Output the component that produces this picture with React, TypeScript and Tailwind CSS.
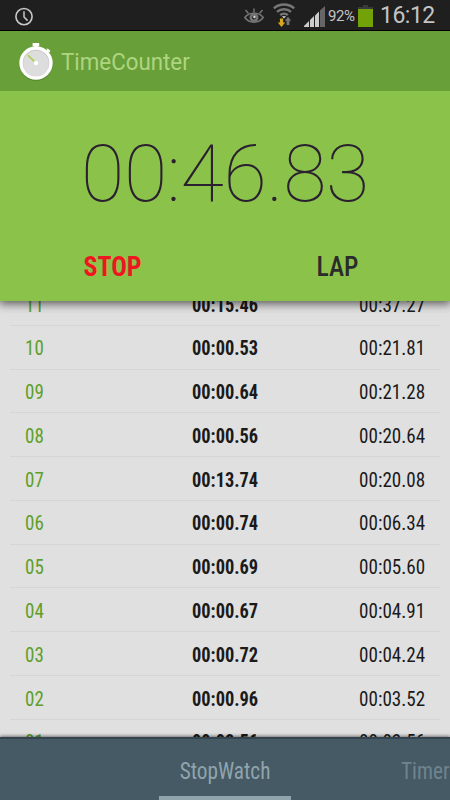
import clsx from 'clsx';

type Lap = {
  id: string;
  split: string;
  total: string;
};

const laps: Lap[] = [
  { id: '11', split: '00:15.46', total: '00:37.27' },
  { id: '10', split: '00:00.53', total: '00:21.81' },
  { id: '09', split: '00:00.64', total: '00:21.28' },
  { id: '08', split: '00:00.56', total: '00:20.64' },
  { id: '07', split: '00:13.74', total: '00:20.08' },
  { id: '06', split: '00:00.74', total: '00:06.34' },
  { id: '05', split: '00:00.69', total: '00:05.60' },
  { id: '04', split: '00:00.67', total: '00:04.91' },
  { id: '03', split: '00:00.72', total: '00:04.24' },
  { id: '02', split: '00:00.96', total: '00:03.52' },
  { id: '01', split: '00:02.56', total: '00:02.56' },
];

const condensed =
  "[font-family:'Roboto_Condensed',Roboto,sans-serif] [font-stretch:75%]";

const ClockIcon = () => (
  <svg width="20" height="20" viewBox="0 0 20 20" fill="none" stroke="#c8c8c8">
    <circle cx="10" cy="9.6" r="8.1" strokeWidth="1.6" />
    <path d="M10 4.2V10L13.6 13.6" strokeWidth="1.5" />
  </svg>
);

const EyeIcon = () => (
  <svg width="20" height="16" viewBox="0 0 20 16" fill="none" stroke="#747474">
    <path
      d="M0.8 9.5C5 3.9 15 3.9 19.2 9.5C15 15.6 5 15.6 0.8 9.5Z"
      strokeWidth="1.6"
    />
    <circle cx="10" cy="9.6" r="3.2" strokeWidth="2.6" />
    <path d="M10 0.5V4.5M1.5 2L4.5 5.4M18.5 2L15.5 5.4" strokeWidth="1.5" />
    <circle cx="10.4" cy="9" r="1.2" fill="#ddd" stroke="none" />
  </svg>
);

const WifiIcon = () => (
  <svg width="22" height="24" viewBox="0 0 22 24" fill="none">
    <g stroke="#777" strokeWidth="2.4">
      <path d="M0.8 5.4C6.5 0.2 15.5 0.2 21.2 5.4" />
      <path d="M4 8.9C8 5.3 14 5.3 18 8.9" />
      <path d="M7.2 12.1C9.4 10.1 12.6 10.1 14.8 12.1" />
    </g>
    <path d="M8.9 13.2H13.1L11 15.4Z" fill="#ddd" />
    <path d="M6.9 15.4H10.1V19.6H12.2L8.5 24L4.8 19.6H6.9Z" fill="#d6a81c" />
    <path d="M13.6 22V17.8H11.8L15 13.8L18.2 17.8H16.4V22Z" fill="#747474" />
  </svg>
);

const SignalIcon = () => (
  <svg width="21" height="21" viewBox="0 0 21 21">
    <path d="M0 21V20L5 15V21Z" fill="#ccc" />
    <path d="M6 21V14L10 10V21Z" fill="#ccc" />
    <path d="M11 21V9.4L15 5.4V21Z" fill="#ccc" />
    <path d="M16 21V4.4L21 0V21Z" fill="#666" />
  </svg>
);

const BatteryIcon = () => (
  <svg width="15" height="22" viewBox="0 0 15 22">
    <path d="M5 0H10V2H15V5H0V2H5Z" fill="#3a3a3a" />
    <rect y="4" width="15" height="18" fill="#73a108" />
  </svg>
);

const StopwatchLogo = () => (
  <svg width="36" height="40" viewBox="0 0 36 40" className="overflow-visible">
    <ellipse cx="18" cy="23.2" rx="16.8" ry="16.7" fill="#000" opacity=".13" />
    <path d="M14.6 2H21.2V5H19.8V8H16V5H14.6Z" fill="#fff" />
    <path
      d="M26.9 11L29.2 8.8L28.2 7.8L30 7.8L32.2 9.4L32 11.4L31.1 10.7L29 13Z"
      fill="#fff"
    />
    <circle cx="18" cy="22" r="16.7" fill="#fff" />
    <circle cx="18" cy="22" r="13.3" fill="#c8c8c8" />
    <circle cx="18" cy="22.5" r="12.8" fill="#ddd" />
    <path d="M18 22L10 14.3" stroke="#a5cf3c" strokeWidth="1.5" />
    <circle cx="18" cy="22" r="2.2" fill="#fff" />
  </svg>
);

const StatusBar = () => (
  <div className="flex h-[31px] shrink-0 items-start border-b border-black bg-[#1f1f1f] pl-[14px] text-[#c4c4c4]">
    <div className="mt-[7px] mr-[210px]">
      <ClockIcon />
    </div>
    <div className="mt-2 mr-[9px]">
      <EyeIcon />
    </div>
    <div className="mt-[3px] mr-[9px]">
      <WifiIcon />
    </div>
    <div className="mt-[6px] mr-[3px]">
      <SignalIcon />
    </div>
    <span className="mt-[6px] w-[30px] text-[15px] leading-5 tracking-[-0.4px]">
      92%
    </span>
    <div className="mt-[5px] mr-[7px]">
      <BatteryIcon />
    </div>
    <span className="text-[23px] leading-[31px] tracking-[-0.5px]">16:12</span>
  </div>
);

const LapRow = ({ id, split, total }: Lap) => (
  <li className="flex h-[43.77px] shrink-0 items-center border-b border-[#d6d6d6] pt-[2.5px] pr-[15px] pl-[15px] text-[20px] leading-6 text-[#1a1a1a]">
    <span className="w-[167px] origin-left scale-x-95 text-[#5d9f28]">
      {id}
    </span>
    <span className="origin-left scale-x-[0.92] font-bold">{split}</span>
    <span className="ml-auto origin-right scale-x-[0.955]">{total}</span>
  </li>
);

const tabs = ['StopWatch', 'Timer'];

const App = () => {
  return (
    <div className="flex h-[800px] w-[450px] flex-col overflow-hidden bg-[#e0e0e0] font-[Roboto,sans-serif]">
      <StatusBar />

      <header className="z-20 flex h-[60px] shrink-0 items-center bg-[#689f38] pl-[18px]">
        <StopwatchLogo />
        <h1 className="ml-[7px] origin-left scale-x-[0.97] pt-[4px] text-[23px] leading-8 text-[#aed581]">
          TimeCounter
        </h1>
      </header>

      {/* Running time */}
      <section className="z-10 flex h-[210px] shrink-0 flex-col bg-[#8bc34a] shadow-[0_2px_9px_1px_rgba(0,0,0,0.6)]">
        <div className="pt-[37px] text-center text-[79px] leading-[92px] font-thin tracking-[-0.3px] text-[#2a2030]">
          00:46.83
        </div>
        <div
          className={clsx(
            condensed,
            'mt-[31px] grid grid-cols-2 text-center text-[27px] leading-8'
          )}
        >
          <button className="scale-x-[0.96] font-bold text-[#ee1620]">
            STOP
          </button>
          <button className="scale-x-[0.95] font-medium text-[#2b2b2b]">
            LAP
          </button>
        </div>
      </section>

      {/* Laps */}
      <ul
        className={clsx(
          condensed,
          'flex min-h-0 flex-1 flex-col overflow-hidden px-[10px]'
        )}
      >
        <li className="-mt-[19px]" />
        {laps.map((lap) => (
          <LapRow key={lap.id} {...lap} />
        ))}
      </ul>

      <nav
        className={clsx(
          condensed,
          'z-10 flex h-[63px] shrink-0 border-t-2 border-[#33444e] bg-[#455a64] pl-[159px] text-[23px] leading-8 text-[#90a4ae] shadow-[0_-1px_3px_rgba(0,0,0,0.5)]'
        )}
      >
        {tabs.map((tab, i) => (
          <button
            key={tab}
            className={clsx(
              'flex h-[61px] shrink-0 items-center justify-center border-b-4 pt-[8px]',
              i === 0
                ? 'w-[132px] border-[#90a4ae]'
                : 'ml-[110px] border-transparent text-[#6f848e]'
            )}
          >
            <span
              className={clsx(
                'scale-x-[0.925]',
                i === 0 ? 'origin-center' : 'origin-left'
              )}
            >
              {tab}
            </span>
          </button>
        ))}
      </nav>
    </div>
  );
};

export default App;
